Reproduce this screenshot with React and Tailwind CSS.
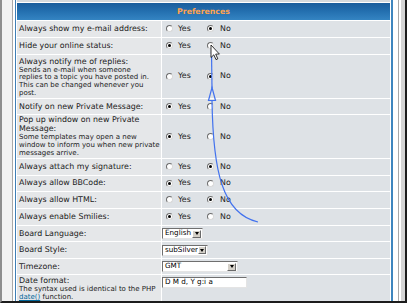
import React from "react";

const F = { fontFamily: '"DejaVu Sans", Verdana, sans-serif' };

function Radio({ checked }) {
  return (
    <span className="relative flex h-[7px] w-[7px] shrink-0 items-center justify-center rounded-full border border-t-[#6d6d6d] border-l-[#6d6d6d] border-r-[#d8d8d8] border-b-[#d8d8d8] bg-white">
      {checked && <span className="block h-[3px] w-[3px] rounded-full bg-black" />}
    </span>
  );
}

function YesNo({ yes }) {
  return (
    <div className="flex items-center pl-[4px] text-[7.9px] text-[#1b1b1b]">
      <div className="flex w-[41px] items-center gap-[5px]">
        <Radio checked={yes} />
        <span>Yes</span>
      </div>
      <div className="flex items-center gap-[6px]">
        <Radio checked={!yes} />
        <span>No</span>
      </div>
    </div>
  );
}

function DropBtn() {
  return (
    <span className="flex h-[8px] w-[9px] items-center justify-center border border-t-white border-l-white border-r-[#6a6a6a] border-b-[#6a6a6a] bg-[#d4d0c8]">
      <span className="block h-0 w-0 border-x-[2.5px] border-t-[3px] border-x-transparent border-t-black" />
    </span>
  );
}

function Select({ label, w }) {
  return (
    <div
      className={`flex h-[11px] items-center justify-between border border-t-[#6f6f6f] border-l-[#6f6f6f] border-r-[#e4e4e4] border-b-[#e4e4e4] bg-white pl-[2px] pr-[1px] text-[7.2px] text-black ${w}`}
    >
      <span>{label}</span>
      <DropBtn />
    </div>
  );
}

function Row({ h, left, right }) {
  return (
    <div className={`flex gap-px ${h}`}>
      <div className="w-[144px] shrink-0 bg-[#e5e7e9] pl-[2px] text-[7.9px] text-[#1b1b1b]">{left}</div>
      <div className="flex-1 bg-[#dee2e6]">{right}</div>
    </div>
  );
}

function Label({ children }) {
  return <div className="flex h-full items-center">{children}</div>;
}

function RightCenter({ children }) {
  return <div className="flex h-full items-center">{children}</div>;
}

export default function App() {
  return (
    <div className="relative h-[306px] w-[407px] overflow-hidden bg-white" style={F}>
      <div className="flex h-[303px] border-b-2 border-l-2 border-r-4 border-b-[#1c1c1c] border-l-[#8e8e8e] border-r-[#1c1c1c]">
        <div className="w-[10px] shrink-0 bg-[#f2f2f2]" />
        <div className="flex flex-1 border-l border-r border-l-[#a9a9a9] border-r-[#a9a9a9] bg-white pl-[2px] pr-[2px]">
          <div className="flex w-[378px] flex-col gap-px overflow-hidden border-l border-r-2 border-l-[#3f7fb6] border-r-[#3f86be] bg-white pr-[1px] pl-[1px]">
            <div className="h-[2px] shrink-0 bg-[#d6dadd]" />
            <div className="flex h-[17px] shrink-0 items-center justify-center bg-gradient-to-b from-[#1a5d9c] via-[#2470b0] to-[#3484c2] text-[7.8px] font-bold text-[#ffa34f]">
              Preferences
            </div>
            <Row h="h-[16px]" left={<Label>Always show my e-mail address:</Label>} right={<RightCenter><YesNo yes={false} /></RightCenter>} />
            <Row h="h-[16px]" left={<Label>Hide your online status:</Label>} right={<RightCenter><YesNo yes={true} /></RightCenter>} />
            <Row
              h="h-[43px]"
              left={
                <div className="pt-[2px]">
                  <div className="leading-[9px]">Always notify me of replies:</div>
                  <div className="pt-[1px] text-[7px] leading-[7.7px]">
                    Sends an e-mail when someone
                    <br />
                    replies to a topic you have posted in.
                    <br />
                    This can be changed whenever you
                    <br />
                    post.
                  </div>
                </div>
              }
              right={<RightCenter><YesNo yes={false} /></RightCenter>}
            />
            <Row h="h-[16px]" left={<Label>Notify on new Private Message:</Label>} right={<RightCenter><YesNo yes={true} /></RightCenter>} />
            <Row
              h="h-[43px]"
              left={
                <div className="pt-[1px]">
                  <div className="leading-[8.5px]">
                    Pop up window on new Private
                    <br />
                    Message:
                  </div>
                  <div className="pt-[1px] text-[7px] leading-[7.8px]">
                    Some templates may open a new
                    <br />
                    window to inform you when new private
                    <br />
                    messages arrive.
                  </div>
                </div>
              }
              right={<RightCenter><YesNo yes={true} /></RightCenter>}
            />
            <Row h="h-[16px]" left={<Label>Always attach my signature:</Label>} right={<RightCenter><YesNo yes={false} /></RightCenter>} />
            <Row h="h-[15px]" left={<Label>Always allow BBCode:</Label>} right={<RightCenter><YesNo yes={true} /></RightCenter>} />
            <Row h="h-[16px]" left={<Label>Always allow HTML:</Label>} right={<RightCenter><YesNo yes={false} /></RightCenter>} />
            <Row h="h-[17px]" left={<Label>Always enable Smilies:</Label>} right={<RightCenter><YesNo yes={true} /></RightCenter>} />
            <Row h="h-[15px]" left={<Label>Board Language:</Label>} right={<RightCenter><Select label="English" w="w-[41px]" /></RightCenter>} />
            <Row h="h-[16px]" left={<Label>Board Style:</Label>} right={<RightCenter><Select label="subSilver" w="w-[46px]" /></RightCenter>} />
            <Row h="h-[15px]" left={<Label>Timezone:</Label>} right={<RightCenter><Select label="GMT" w="w-[76px]" /></RightCenter>} />
            <Row
              h="h-[26px]"
              left={
                <div className="pt-[1px]">
                  <div className="leading-[9px]">Date format:</div>
                  <div className="text-[7px] leading-[8px]">
                    The syntax used is identical to the PHP
                    <br />
                    <span className="text-[#006699] underline">date()</span> function.
                  </div>
                </div>
              }
              right={
                <div className="pt-[2px]">
                  <div className="flex h-[11px] w-[85px] items-center border border-t-[#6f6f6f] border-l-[#6f6f6f] border-r-[#e4e4e4] border-b-[#e4e4e4] bg-white pl-[2px] text-[7.2px] text-black">
                    D M d, Y g:i a
                  </div>
                </div>
              }
            />
          </div>
          <div className="w-[3px] shrink-0 bg-white" />
        </div>
        <div className="w-[2px] shrink-0 bg-white" />
        <div className="w-[4px] shrink-0 bg-[#d4d4d4]" />
      </div>

      <svg className="pointer-events-none absolute left-0 top-0" width="407" height="306" viewBox="0 0 407 306">
        <path d="M211.5 52 L212 88" stroke="#4272ee" strokeWidth="1.2" fill="none" />
        <path d="M212 87.5 L215.5 100.5 L208.5 100.5 Z" stroke="#4272ee" strokeWidth="1.2" fill="none" strokeLinejoin="miter" />
        <path d="M212 100.5 C213 170, 222 214, 258 222" stroke="#4272ee" strokeWidth="1.2" fill="none" />
        <path
          d="M211 45 L211 57.5 L213.8 54.8 L216 59.6 L217.8 58.8 L215.7 54.1 L219.4 54.1 Z"
          fill="white"
          stroke="black"
          strokeWidth="0.8"
          strokeLinejoin="round"
        />
      </svg>
    </div>
  );
}
